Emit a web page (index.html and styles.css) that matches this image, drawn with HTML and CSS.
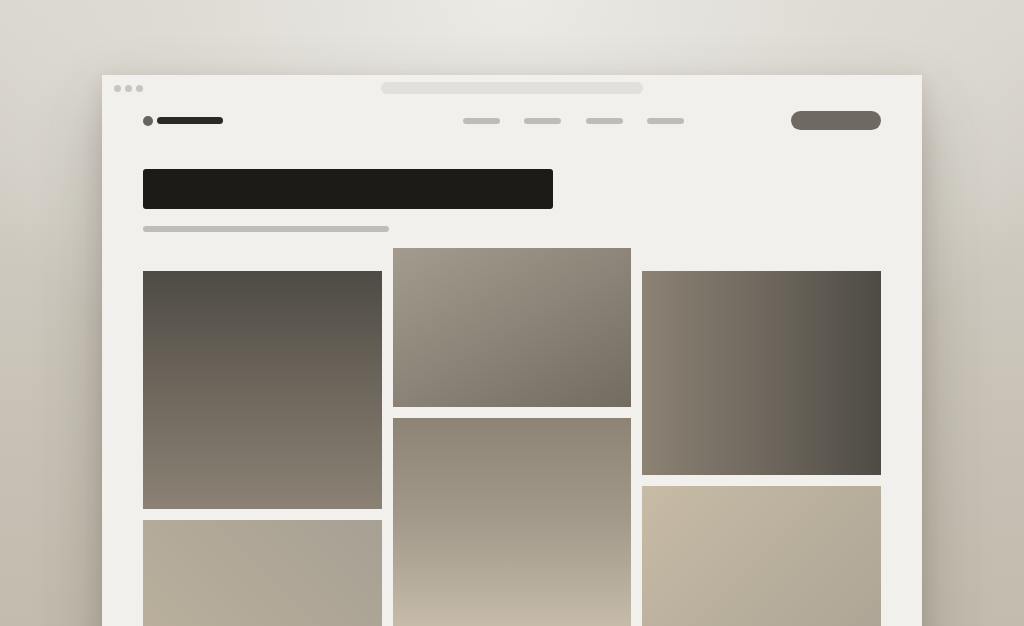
FILE: index.html
```html
<!DOCTYPE html>
<html lang="en">
<head>
<meta charset="utf-8">
<title>Gallery mockup</title>
<link rel="stylesheet" href="styles.css">
</head>
<body>
<div class="stage">
  <div class="window">
    <div class="chrome">
      <div class="dots"><span class="dot"></span><span class="dot"></span><span class="dot"></span></div>
      <div class="address"></div>
    </div>
    <div class="page">
      <header class="header">
        <div class="logo"><span class="logo-mark"></span><span class="logo-word"></span></div>
        <nav class="nav"><span class="nav-link"></span><span class="nav-link"></span><span class="nav-link"></span><span class="nav-link"></span></nav>
        <span class="cta"></span>
      </header>
      <div class="headline"></div>
      <div class="subline"></div>
      <div class="grid">
        <div class="col">
          <div class="card c1a"></div>
          <div class="card c1b"></div>
        </div>
        <div class="col col-raised">
          <div class="card c2a"></div>
          <div class="card c2b"></div>
        </div>
        <div class="col">
          <div class="card c3a"></div>
          <div class="card c3b"></div>
        </div>
      </div>
    </div>
  </div>
</div>
</body>
</html>
```
FILE: styles.css
```css
* { box-sizing: border-box; }
html, body {
  margin: 0;
  padding: 0;
  width: 1024px;
  height: 626px;
  overflow: hidden;
  font-family: "Liberation Sans", Arial, sans-serif;
}
body {
  background:
    radial-gradient(ellipse 620px 420px at 512px 0px, #ebeae5 0%, #dedbd4 55%, rgba(222,219,212,0) 100%),
    linear-gradient(180deg, #d9d6cf 0%, #c9c3b8 60%, #c2bbae 100%);
}
.stage {
  height: 626px;
  padding-top: 75px;
  overflow: hidden;
}
.window {
  margin-left: 102px;
  width: 820px;
  height: 640px;
  background: #f1f0ec;
  box-shadow: 0 30px 60px rgba(70, 60, 45, 0.3), 0 6px 18px rgba(70, 60, 45, 0.12);
}
.chrome {
  position: relative;
  height: 26px;
  padding-top: 7px;
  display: flex;
  justify-content: center;
}
.dots {
  position: absolute;
  left: 12px;
  top: 10px;
  display: flex;
  gap: 4px;
}
.dot {
  width: 7px;
  height: 7px;
  border-radius: 50%;
  background: #c6c5c1;
}
.address {
  width: 262px;
  height: 12px;
  border-radius: 6px;
  background: #e1e0db;
}
.page {
  padding: 10px 41px 0 41px;
}
.header {
  display: flex;
  align-items: center;
  height: 19px;
}
.logo {
  display: flex;
  align-items: center;
  gap: 4px;
}
.logo-mark {
  width: 10px;
  height: 10px;
  border-radius: 50%;
  background: #666360;
}
.logo-word {
  width: 66px;
  height: 7px;
  border-radius: 4px;
  background: #2a2926;
}
.nav {
  margin-left: auto;
  margin-right: 107px;
  display: flex;
  gap: 24.5px;
}
.nav-link {
  width: 37px;
  height: 6px;
  border-radius: 3px;
  background: #bdbcb7;
}
.cta {
  width: 90px;
  height: 19px;
  border-radius: 10px;
  background: #6f6a61;
}
.headline {
  margin-top: 39px;
  width: 410px;
  height: 40px;
  border-radius: 3px;
  background: #1c1b18;
}
.subline {
  margin-top: 17px;
  width: 246px;
  height: 6px;
  border-radius: 3px;
  background: #bebdb8;
}
.grid {
  margin-top: 39px;
  display: grid;
  grid-template-columns: repeat(3, 1fr);
  gap: 11px;
  align-items: start;
}
.col {
  display: flex;
  flex-direction: column;
  gap: 11px;
}
.col-raised {
  margin-top: -23px;
}
.card { width: 100%; }
.c1a {
  height: 238px;
  background: linear-gradient(180deg, #4e4b44 0%, #6b645a 45%, #8b8275 100%);
}
.c1b {
  height: 240px;
  background: linear-gradient(45deg, #c2b6a1 0%, #b3aa99 50%, #a7a093 100%);
}
.c2a {
  height: 159px;
  background: linear-gradient(150deg, #a39b8d 0%, #8c8478 50%, #716b61 100%);
}
.c2b {
  height: 230px;
  background: linear-gradient(180deg, #8e8476 0%, #a09788 40%, #b1a898 65%, #c6bba9 90%, #c9beac 100%);
}
.c3a {
  height: 204px;
  background: linear-gradient(90deg, #8c8274 0%, #6f685e 50%, #4e4b45 100%);
}
.c3b {
  height: 200px;
  background: linear-gradient(135deg, #c7bba5 0%, #b8ae9c 50%, #aaa294 100%);
}
```
